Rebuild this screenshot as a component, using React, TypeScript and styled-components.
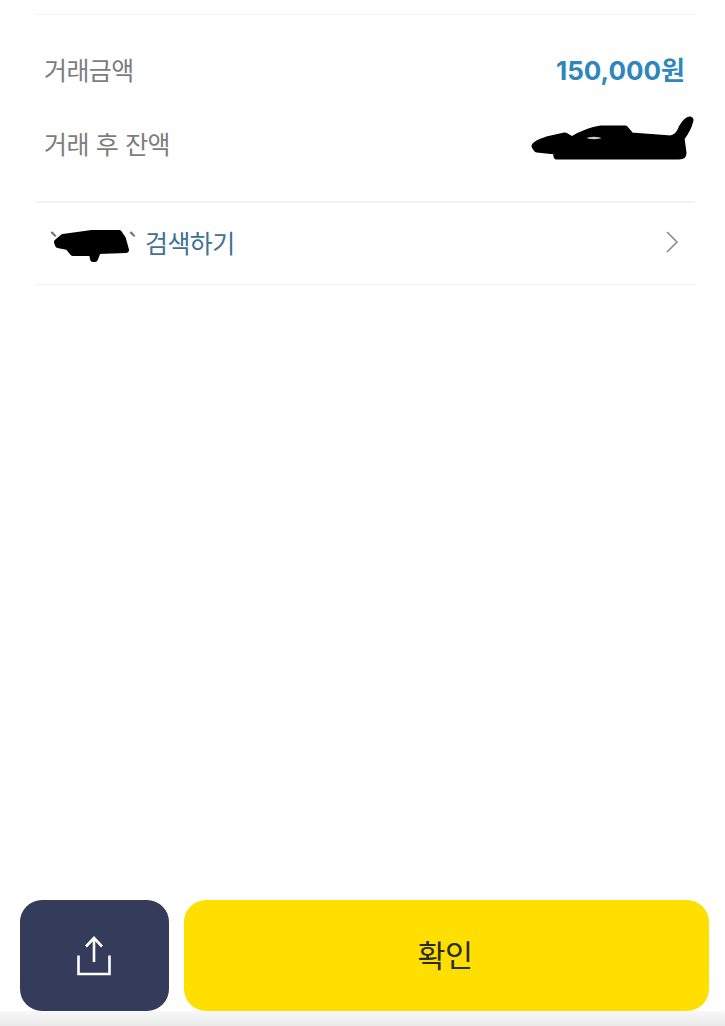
import React from "react";
import styled, { createGlobalStyle } from "styled-components";

const Global = createGlobalStyle`
  html, body { margin: 0; padding: 0; background: #fff; }
  * { box-sizing: border-box; }
`;

const Page = styled.div`
  width: 725px;
  height: 1026px;
  overflow: hidden;
  display: flex;
  flex-direction: column;
  padding-top: 14px;
  background: #fff;
  font-family: "Noto Sans CJK KR", "Noto Sans", sans-serif;
`;

const Section = styled.section`
  margin: 0 30px 0 35px;
  border-top: 1px solid #f2f2f2;
`;

const Summary = styled.div`
  display: flex;
  flex-direction: column;
  gap: 40px;
  padding: 37px 10px 40px 9px;
  height: 188px;
  border-bottom: 2px solid #f3f3f3;
`;

const Row = styled.div`
  display: flex;
  align-items: center;
  justify-content: space-between;
  height: 34px;
  position: relative;
`;

const Label = styled.span`
  font-size: 25px;
  font-weight: 400;
  line-height: 34px;
  letter-spacing: -0.6px;
  word-spacing: 2px;
  color: #7d7d7d;
`;

const Amount = styled.span`
  font-family: "Inter", "Noto Sans CJK KR", sans-serif;
  font-weight: 700;
  font-size: 26px;
  line-height: 34px;
  letter-spacing: 0;
  color: #2f86bd;
  transform: translateY(2px);
`;

const Redaction = styled.svg`
  position: absolute;
  display: block;
  overflow: visible;
`;

const SearchRow = styled.div`
  height: 82px;
  margin: 0 30px 0 35px;
  padding: 0 16px 3px 12px;
  display: flex;
  align-items: center;
  justify-content: space-between;
  border-bottom: 1px solid #f2f2f2;
`;

const SearchLabel = styled.span`
  display: flex;
  align-items: center;
  position: relative;
  font-size: 25px;
  font-weight: 400;
  line-height: 34px;
  letter-spacing: -0.6px;
  color: #3f7195;
  white-space: pre;
`;

const Quote = styled.span`
  display: inline-block;
  width: ${(p: { $w: number }) => p.$w}px;
  color: #5f6f7c;
`;

const ClosingQuote = styled(Quote)`
  position: absolute;
  left: 79px;
  top: 0;
`;

const Spacer = styled.div`
  flex: 1;
`;

const Actions = styled.div`
  display: flex;
  gap: 15px;
  padding: 0 16px 0 20px;
  height: 111px;
`;

const ShareButton = styled.button`
  width: 149px;
  height: 111px;
  border: 0;
  border-radius: 22px;
  background: #343b5b;
  display: flex;
  align-items: center;
  justify-content: center;
  padding: 0 1px 0 0;
`;

const ConfirmButton = styled.button`
  flex: 1;
  height: 111px;
  border: 0;
  border-radius: 22px;
  background: #ffdf00;
  color: #2a2a1e;
  font-family: "Noto Sans CJK KR", sans-serif;
  font-size: 30.5px;
  letter-spacing: -0.5px;
  padding: 0 3px 3px 0;
`;

const BottomFade = styled.div`
  height: 15px;
  background: linear-gradient(#f8f8f8, #e9e9e9);
`;

export default function App() {
  return (
    <Page>
      <Global />
      <Section>
        <Summary>
          <Row>
            <Label>거래금액</Label>
            <Amount>150,000원</Amount>
          </Row>
          <Row>
            <Label>거래 후 잔액</Label>
            <Redaction
              style={{ right: -11, top: -10 }}
              width="165"
              height="44"
              viewBox="0 0 165 44"
            >
              <path
                d="M4 30 Q6 27 16 24 L34 20 L41 24 Q56 15 70 13 L94 13 L100 20 L140 23 Q148 21 151 12 Q155 5 159 4 Q157 13 150 22 L152 37 Q152 40 148 40 L26 40 L25 35 L6 33 Z"
                fill="#000"
                stroke="#000"
                strokeWidth="7"
                strokeLinejoin="round"
              />
              <ellipse cx="63" cy="22" rx="7" ry="1.2" fill="#c9c9c9" />
            </Redaction>
          </Row>
        </Summary>
      </Section>
      <SearchRow>
        <SearchLabel>
          <Quote $w={98}>`</Quote>검색하기
          <Redaction
            style={{ left: 4, top: 3 }}
            width="82"
            height="36"
            viewBox="0 0 82 36"
          >
            <path
              d="M6 14 L12 9 L41 5 L68 5 L72 11 L75 22 L47 23 L44 31 L42 31 L41 25 L22 25 L17 19 L7 17 Z"
              fill="#000"
              stroke="#000"
              strokeWidth="6"
              strokeLinejoin="round"
            />
          </Redaction>
          <ClosingQuote $w={0}>`</ClosingQuote>
        </SearchLabel>
        <svg width="14" height="24" viewBox="0 0 14 24" fill="none">
          <path d="M2 2 L12 12 L2 22" stroke="#8c8c8c" strokeWidth="1.6" />
        </svg>
      </SearchRow>
      <Spacer />
      <Actions>
        <ShareButton aria-label="공유">
          <svg width="36" height="40" viewBox="0 0 36 40" fill="none" stroke="#fff" strokeWidth="2.6">
            <path d="M18 26 V2.5" />
            <path d="M10 10.5 L18 2 L26 10.5" />
            <path d="M2.5 19.5 V38 H33.5 V19.5" />
          </svg>
        </ShareButton>
        <ConfirmButton>확인</ConfirmButton>
      </Actions>
      <BottomFade />
    </Page>
  );
}
